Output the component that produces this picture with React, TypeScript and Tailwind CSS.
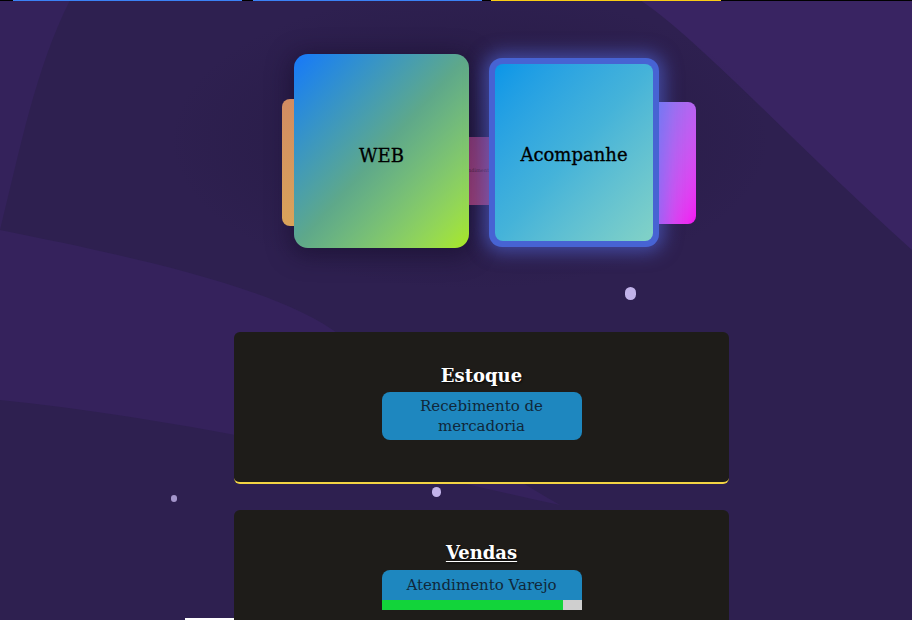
import React from "react";

const slab = "font-['DejaVu_Serif','Liberation_Serif',serif]";

function Backdrop() {
  return (
    <svg className="absolute inset-0 h-full w-full" viewBox="0 0 912 620" preserveAspectRatio="none">
      <defs>
        <radialGradient id="shade" cx="0.5" cy="0.5" r="0.5">
          <stop offset="0" stopColor="#21173a" stopOpacity="0.7" />
          <stop offset="0.6" stopColor="#241940" stopOpacity="0.35" />
          <stop offset="1" stopColor="#241940" stopOpacity="0" />
        </radialGradient>
      </defs>
      <rect width="912" height="620" fill="#2e2050" />
      <path d="M0 0 L640 0 C700 40 800 150 912 250 L912 0 Z" fill="#392462" />
      <path d="M0 0 L70 0 C35 70 20 150 0 230 Z" fill="#34225b" />
      <path d="M0 230 C150 260 280 290 340 335 C400 400 480 460 560 505 C400 470 200 420 0 400 Z" fill="#35225c" />
      <ellipse cx="470" cy="140" rx="300" ry="150" fill="url(#shade)" />
    </svg>
  );
}

function Dot({ className }: { className: string }) {
  return <span className={`absolute rounded-full bg-[#c2b3ea] blur-[0.5px] ${className}`} />;
}

export default function App() {
  return (
    <main className={`relative h-[620px] w-full overflow-hidden ${slab}`}>
      <Backdrop />

      {/* top steps */}
      <div className="relative flex h-px bg-black">
        <div className="ml-[13px] w-[229px] bg-[#3b82f6]" />
        <div className="ml-[11px] w-[229px] bg-[#3b82f6]" />
        <div className="ml-[9px] w-[230px] bg-[#facc15]" />
      </div>

      {/* carousel */}
      <section className="relative mt-[53px] h-[195px]">
        <div className="absolute left-[294px] top-0 h-[194px] w-[175px] rounded-[14px] shadow-[0_4px_22px_4px_rgba(20,12,40,0.5)]" />
        <div className="absolute left-[282px] top-[45px] h-[127px] w-[30px] rounded-lg bg-linear-to-b from-[#d28c62] to-[#d9a35a]" />
        <div className="absolute left-[440px] top-[83px] flex h-[68px] w-[70px] items-center justify-end overflow-hidden rounded-md bg-linear-to-br from-[#732f68] to-[#943a6b] pr-[18px]">
          <span className="text-[5px] text-black/50">Atendimento</span>
        </div>
        <div className="absolute left-[640px] top-[48px] h-[122px] w-[56px] rounded-lg bg-linear-to-br from-[#6680f0] to-[#f40af2]" />

        <div className="relative flex items-start gap-5 pl-[294px]">
          <div className="flex h-[194px] w-[175px] items-center justify-center rounded-[14px] bg-linear-to-br from-[#1877fa] via-[#5ea88a] to-[#a9e91a] pt-2">
            <span className="text-[18px] text-black [-webkit-text-stroke:0.3px_black]">WEB</span>
          </div>
          <div className="mt-[4px] h-[189px] w-[170px] rounded-[13px] bg-[#4763d3] p-[6px] shadow-[0_0_18px_5px_rgba(90,120,250,0.5)]">
            <div className="flex h-full w-full items-center justify-center rounded-[8px] bg-linear-to-br from-[#0796e8] via-[#45b3d9] to-[#82d2c6] pt-1">
              <span className="text-[18px] text-black [-webkit-text-stroke:0.3px_black]">Acompanhe</span>
            </div>
          </div>
        </div>
      </section>

      <Dot className="left-[625px] top-[287px] h-[13px] w-[11px]" />
      <Dot className="left-[432px] top-[487px] h-[10px] w-[9px]" />
      <Dot className="left-[171px] top-[495px] h-[7px] w-[6px] opacity-80" />

      {/* panels */}
      <div className="relative ml-[234px] mt-[83px] flex w-[495px] flex-col gap-[26px]">
        <div className="flex flex-col items-center rounded-md border-b-2 border-[#f3d444] bg-[#1e1c19] pb-[42px] pt-[32px]">
          <h2 className="text-[18px] font-bold leading-6 text-white [text-shadow:1px_1px_2px_rgba(0,0,0,0.8)]">Estoque</h2>
          <button className="mt-[4px] w-[200px] rounded-lg bg-[#1e87bf] px-6 py-[4px] text-[15px] leading-5 text-[#10283a]">
            Recebimento de mercadoria
          </button>
        </div>

        <div className="flex h-[140px] flex-col items-center rounded-md bg-[#1e1c19] pt-[31px]">
          <h2 className="text-[18px] font-bold leading-6 text-white underline underline-offset-2 [text-shadow:1px_1px_2px_rgba(0,0,0,0.8)]">Vendas</h2>
          <div className="mt-[5px] w-[200px] overflow-hidden rounded-t-lg bg-[#1e87bf]">
            <div className="flex h-[30px] items-center justify-center text-[15px] text-[#10283a]">Atendimento Varejo</div>
            <div className="flex h-[10px] bg-[#cfcfcf]">
              <div className="w-[181px] bg-[#12d43a]" />
            </div>
          </div>
        </div>
      </div>

      <div className="absolute bottom-0 left-[185px] h-[2px] w-[49px] bg-white" />
    </main>
  );
}
